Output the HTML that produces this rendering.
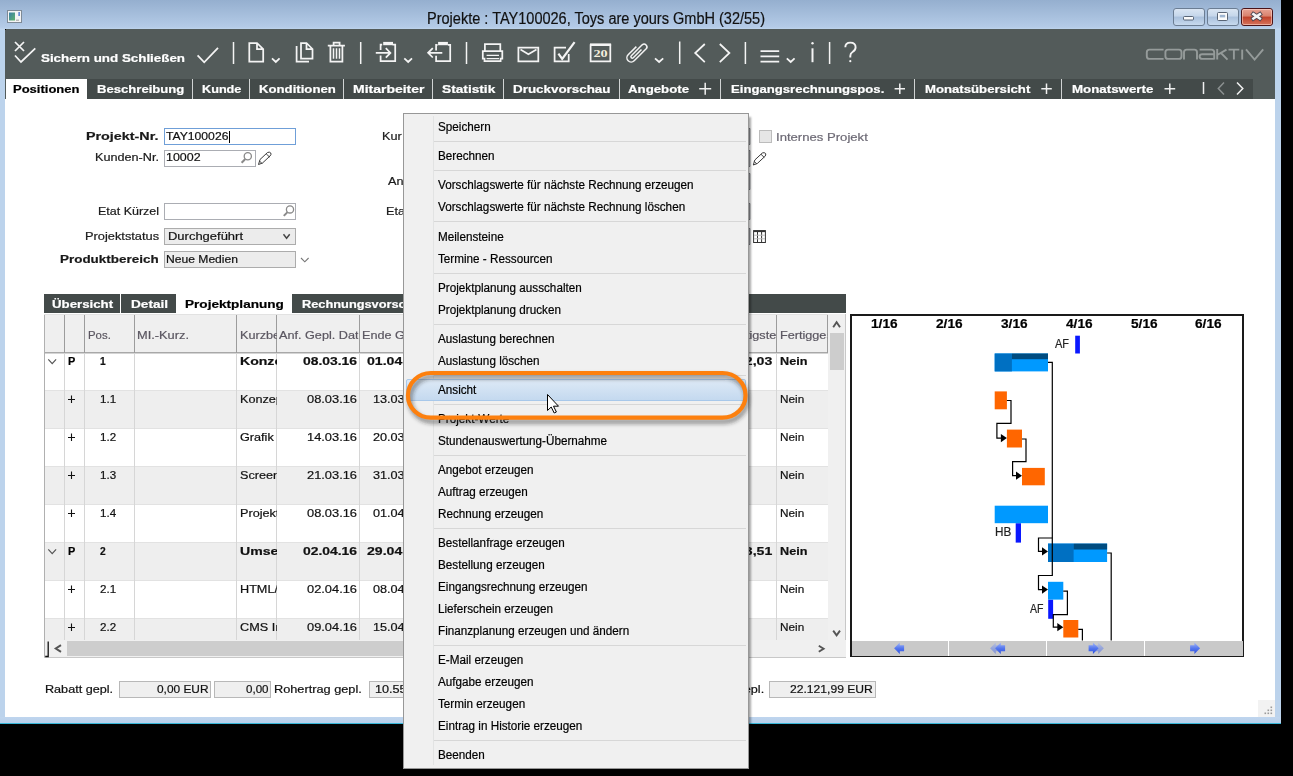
<!DOCTYPE html>
<html><head><meta charset="utf-8"><style>
html,body{margin:0;padding:0;}
body{width:1293px;height:776px;position:relative;overflow:hidden;background:#000;font-family:"Liberation Sans", sans-serif;}
.a{position:absolute;box-sizing:border-box;}
.t{position:absolute;white-space:pre;line-height:1;transform-origin:0 0;font-family:"Liberation Sans", sans-serif;-webkit-text-stroke:0.2px currentColor;}
svg{position:absolute;overflow:visible;}
</style></head><body>
<div class='a' style='left:0px;top:0px;width:1281px;height:724px;background:#bcd3ec;'></div>
<div class='a' style='left:0px;top:0px;width:1281px;height:30px;background:linear-gradient(#95afcf,#b4cbe7 90%,#c2d8ef);'></div>
<div class='a' style='left:0px;top:717px;width:1281px;height:7px;background:linear-gradient(#bfd5ee,#b7cfea);'></div>
<div class='a' style='left:0px;top:723px;width:1281px;height:1px;background:#38b7d8;'></div>
<div class='a' style='left:5px;top:30px;width:1270px;height:687px;background:#fff;'></div>
<div class='a' style='left:5px;top:29px;width:1270px;height:70px;background:#535b5a;'></div>
<div class='a' style='left:5px;top:29px;width:1px;height:1px;background:#000;'></div>
<div class='a' style='left:6px;top:79px;width:1247px;height:20px;background:#434a49;'></div>
<div class='a' style='left:6px;top:79px;width:81px;height:20px;background:#fff;'></div>
<span class='t' style='left:427.40px;top:11.00px;font-size:16px;font-weight:400;color:#111;transform:scaleX(0.9078);'>Projekte : TAY100026, Toys are yours GmbH (32/55)</span>
<span class='t' style='left:41.00px;top:53.00px;font-size:11px;font-weight:700;color:#fff;transform:scaleX(1.2144);'>Sichern und Schließen</span>
<span class='t' style='left:12.70px;top:84.00px;font-size:11px;font-weight:700;color:#000;transform:scaleX(1.1826);'>Positionen</span>
<span class='t' style='left:97.10px;top:84.00px;font-size:11px;font-weight:700;color:#fff;transform:scaleX(1.1900);'>Beschreibung</span>
<span class='t' style='left:202.40px;top:84.00px;font-size:11px;font-weight:700;color:#fff;transform:scaleX(1.1509);'>Kunde</span>
<span class='t' style='left:258.90px;top:84.00px;font-size:11px;font-weight:700;color:#fff;transform:scaleX(1.1971);'>Konditionen</span>
<span class='t' style='left:353.00px;top:84.00px;font-size:11px;font-weight:700;color:#fff;transform:scaleX(1.2711);'>Mitarbeiter</span>
<span class='t' style='left:442.20px;top:84.00px;font-size:11px;font-weight:700;color:#fff;transform:scaleX(1.2454);'>Statistik</span>
<span class='t' style='left:513.40px;top:84.00px;font-size:11px;font-weight:700;color:#fff;transform:scaleX(1.2173);'>Druckvorschau</span>
<span class='t' style='left:628.30px;top:84.00px;font-size:11px;font-weight:700;color:#fff;transform:scaleX(1.2043);'>Angebote</span>
<span class='t' style='left:730.70px;top:84.00px;font-size:11px;font-weight:700;color:#fff;transform:scaleX(1.1943);'>Eingangsrechnungspos.</span>
<span class='t' style='left:924.70px;top:84.00px;font-size:11px;font-weight:700;color:#fff;transform:scaleX(1.1964);'>Monatsübersicht</span>
<span class='t' style='left:1071.60px;top:84.00px;font-size:11px;font-weight:700;color:#fff;transform:scaleX(1.2104);'>Monatswerte</span>
<div class='a' style='left:192px;top:79px;width:1px;height:20px;background:#d0d3d3;'></div>
<div class='a' style='left:249px;top:79px;width:1px;height:20px;background:#d0d3d3;'></div>
<div class='a' style='left:343px;top:79px;width:1px;height:20px;background:#d0d3d3;'></div>
<div class='a' style='left:432px;top:79px;width:1px;height:20px;background:#d0d3d3;'></div>
<div class='a' style='left:503px;top:79px;width:1px;height:20px;background:#d0d3d3;'></div>
<div class='a' style='left:619px;top:79px;width:1px;height:20px;background:#d0d3d3;'></div>
<div class='a' style='left:720px;top:79px;width:1px;height:20px;background:#d0d3d3;'></div>
<div class='a' style='left:914px;top:79px;width:1px;height:20px;background:#d0d3d3;'></div>
<div class='a' style='left:1061px;top:79px;width:1px;height:20px;background:#d0d3d3;'></div>
<svg style='left:0;top:0' width='1293' height='100' viewBox='0 0 1293 100'>
<g fill='none' stroke='#f4f4f4' stroke-width='1.75' stroke-linecap='butt' stroke-linejoin='miter'>
<path d='M15 42 L24 51 M24 42 L15 51'/>
<path d='M15 55.5 L21 62 L35.3 48.3'/>
<path d='M197.6 55.4 L204.2 62.3 L218 47.8'/>
<path d='M233.5 42 V64 M360.7 42 V64 M466.5 42 V64 M679.7 41.6 V64.1 M745.4 42 V64 M829.6 42 V64' stroke-width='1.5'/>
<path d='M249.3 43 H257 L263.2 49.2 V61.5 H249.3 Z M257 43 V49.2 H263.2'/>
<path d='M272 58.3 L275.8 62 L279.6 58.3 M404.3 58.3 L408.2 62 L412 58.3 M655 58.3 L659.1 62 L663.2 58.3 M786.8 58.3 L790.7 62 L794.6 58.3'/>
<path d='M301 43 H306.5 L312.5 49 V58.5 H301 Z M306.5 43 V49 H312.5'/>
<path d='M296.6 46 V61.5 H309'/>
<path d='M327.8 45.6 H344.9 M333.6 45.6 V42.6 H339.6 V45.6 M330.4 45.6 V61.5 H342.4 V45.6'/><path d='M333.5 48.3 V58.8 M336.5 48.3 V58.8 M339.5 48.3 V58.8' stroke-width='1.5'/>
<path d='M380.6 50 V44.6 H382.2 M392.6 44.6 H395.2 V61.2 H380.6 V55.6 M375.8 52.9 H390.2 M385.8 48.2 L390.4 52.9 L385.8 57.6'/>
<path d='M436.1 50.5 V44.8 H437.6 M447.9 44.8 H450.2 V61.2 H436.1 V55.7 M428 52.8 H442.3 M432.8 48.1 L428.1 52.8 L432.8 57.5'/>
<path d='M484.9 51 V44 H500.3 V51 M482.8 51 H502.3 V58.6 H500.6 V61.2 H484.5 V58.6 H482.8 Z'/><path d='M486.6 55.4 H499 M486.6 58.6 H499' stroke-width='1.3'/>
<path d='M518.4 47.6 H538.3 V61.4 H518.4 Z M520.5 49.6 L528.4 54.2 L536.5 49.6'/>
<path d='M566 47.6 H554.6 V61.4 H568.7 V54'/><path d='M558.4 53.6 L562.2 58.8 L574.6 42.2' stroke-width='2.2'/>
<path d='M590.6 45 H610.3 V61.4 H590.6 Z'/>
<path d='M657 60 Z'/>
<path d='M704.8 44 L695.2 53 L704.8 62.2'/>
<path d='M719.8 44 L729.4 53 L719.8 62.2'/>
<path d='M760.5 51.2 H779.2 M760.5 56.4 H779.2 M760.5 61.6 H779.2' stroke-width='1.8'/>
<path d='M812.5 48.3 V62.2' stroke-width='2'/>
<path d='M845.3 47.3 Q845.3 42.6 850.3 42.6 Q855.6 42.6 855.6 47.3 Q855.6 50.3 852.5 52 Q850.3 53.2 850.3 56 V57.5' stroke-width='1.9'/>
</g>
<rect x='590' y='43.4' width='21.1' height='2.4' fill='#f4f4f4'/>
<rect x='383.2' y='41.9' width='9.8' height='3.3' fill='#f4f4f4'/>
<rect x='438.1' y='41.9' width='9.8' height='3.3' fill='#f4f4f4'/>
<circle cx='812.5' cy='43.3' r='1.2' fill='#f4f4f4'/>
<circle cx='850.3' cy='61.2' r='1.1' fill='#f4f4f4'/>
<text x='600.5' y='57' font-family='Liberation Serif' font-weight='700' font-size='10.8' fill='#f2eedd' text-anchor='middle' transform='translate(600.5 0) scale(1.32 1) translate(-600.5 0)'>20</text>
<g transform='translate(636.4 52.6) rotate(-45)' fill='none' stroke='#f4f4f4' stroke-width='1.5'>
<path d='M4.2 -4.25 H-7.4 A4.25 4.25 0 0 0 -7.4 4.25 H9.6 A2.83 2.83 0 0 0 9.6 -1.4 H-5.8 A1.4 1.4 0 0 0 -5.8 1.4 H5.8'/>
</g>
</svg>
<svg style='left:0;top:0' width='1293' height='30' viewBox='0 0 1293 30'>
<defs>
<linearGradient id='gb' x1='0' y1='0' x2='0' y2='1'><stop offset='0' stop-color='#dbe6f3'/><stop offset='0.45' stop-color='#c5d6ea'/><stop offset='0.5' stop-color='#a9c0dc'/><stop offset='1' stop-color='#c9dbef'/></linearGradient>
<linearGradient id='gr' x1='0' y1='0' x2='0' y2='1'><stop offset='0' stop-color='#e8a597'/><stop offset='0.45' stop-color='#d9816c'/><stop offset='0.5' stop-color='#c0412a'/><stop offset='1' stop-color='#d7775f'/></linearGradient>
<linearGradient id='gi' x1='0' y1='0' x2='1' y2='1'><stop offset='0' stop-color='#3b7fa8'/><stop offset='1' stop-color='#5fb36a'/></linearGradient>
</defs>
<rect x='7.5' y='10.5' width='14' height='12' fill='#f4f4f4' stroke='#7e8a96' stroke-width='1'/>
<rect x='9' y='12.5' width='6' height='8' fill='url(#gi)'/>
<rect x='18.5' y='12' width='1.2' height='4' fill='#2e62c8'/>
<rect x='16' y='19.5' width='3' height='1.5' fill='#bbb'/>
<rect x='1173.5' y='8.5' width='31' height='17' rx='2.5' fill='url(#gb)' stroke='#6b7d93'/>
<rect x='1207.5' y='8.5' width='31' height='17' rx='2.5' fill='url(#gb)' stroke='#6b7d93'/>
<rect x='1241.5' y='8.5' width='31' height='17' rx='2.5' fill='url(#gr)' stroke='#4a1418'/><rect x='1242.5' y='9.5' width='29' height='15' rx='1.5' fill='none' stroke='rgba(255,220,210,0.55)'/>
<rect x='1183.5' y='16.5' width='10' height='3.5' rx='1' fill='#fbfbfb' stroke='#4a5668' stroke-width='0.9'/>
<rect x='1217.5' y='12.5' width='10' height='8' rx='1' fill='#fbfbfb' stroke='#4a5668' stroke-width='0.9'/>
<rect x='1219.8' y='14.8' width='5.4' height='2.6' fill='#9fb6d2'/>
<path d='M1253.4 14.2 L1259.8 18.5 M1259.8 14.2 L1253.4 18.5' stroke='#4e4650' stroke-width='4.4' stroke-linecap='square'/>
<path d='M1253.4 14.2 L1259.8 18.5 M1259.8 14.2 L1253.4 18.5' stroke='#f4f4f4' stroke-width='2.6' stroke-linecap='square'/>
</svg>
<svg style='left:0;top:0' width='1293' height='80' viewBox='0 0 1293 80'>
<g fill='none' stroke='#959b9a' stroke-width='1.9'>
<path d='M1163.6 49.6 H1149.5 Q1146.8 49.6 1146.8 52.3 V56.2 Q1146.8 58.9 1149.5 58.9 H1163.6'/>
<path d='M1168 49.6 H1179 Q1181.5 49.6 1181.5 52.3 V56.2 Q1181.5 58.9 1179 58.9 H1168 Q1165.4 58.9 1165.4 56.2 V52.3 Q1165.4 49.6 1168 49.6 Z'/>
<path d='M1184 59.6 V52.3 Q1184 49.6 1186.7 49.6 H1194.4 Q1197 49.6 1197 52.3 V59.6'/>
<path d='M1199.6 49.6 H1211.5 Q1214.2 49.6 1214.2 52.3 V59.6 M1214.2 54.2 H1202.3 Q1199.6 54.2 1199.6 56.5 Q1199.6 58.9 1202.3 58.9 H1214.2'/>
<path d='M1217.2 49 V59.6 M1217.2 55 L1226.5 49.6 M1221 53 L1227.5 59.6'/>
<path d='M1228.5 49.6 H1239.3 M1233.9 49.6 V59.6'/>
<path d='M1242.2 49.6 V59.6'/>
<path d='M1246 49.3 L1254.6 59.6 L1263.2 49.3'/>
</g></svg>
<svg style='left:0;top:0' width='1293' height='100' viewBox='0 0 1293 100'>
<g fill='none' stroke='#f0f0f0' stroke-width='1.5'>
<path d='M699.2 88.8 H711.2 M705.2 82.8 V94.8'/>
<path d='M894.6 88.8 H905 M899.8 83.6 V94'/>
<path d='M1041.3 88.8 H1051.8 M1046.5 83.6 V94'/>
<path d='M1164.5 88.8 H1175.2 M1169.8 83.6 V94'/>
<path d='M1203.5 82 V94'/>
<path d='M1224 82.5 L1218.3 88.5 L1224 94.5' stroke='#8b9090'/>
<path d='M1237 82.5 L1242.8 88.5 L1237 94.5'/>
</g></svg>
<span class='t' style='left:86.20px;top:131.00px;font-size:11px;font-weight:700;color:#1a1a1a;transform:scaleX(1.3012);'>Projekt-Nr.</span>
<span class='t' style='left:94.60px;top:152.20px;font-size:11px;font-weight:400;color:#1a1a1a;transform:scaleX(1.1499);'>Kunden-Nr.</span>
<span class='t' style='left:97.60px;top:206.10px;font-size:11px;font-weight:400;color:#1a1a1a;transform:scaleX(1.1336);'>Etat Kürzel</span>
<span class='t' style='left:84.50px;top:231.20px;font-size:11px;font-weight:400;color:#1a1a1a;transform:scaleX(1.1652);'>Projektstatus</span>
<span class='t' style='left:60.00px;top:254.10px;font-size:11px;font-weight:700;color:#1a1a1a;transform:scaleX(1.2220);'>Produktbereich</span>
<div class='a' style='left:164px;top:128px;width:132px;height:17px;background:#fff;border:1px solid #6f9fd8;'></div>
<span class='t' style='left:165.80px;top:131.20px;font-size:11px;font-weight:400;color:#111;transform:scaleX(1.1050);'>TAY100026</span>
<div class='a' style='left:229px;top:131px;width:1px;height:12px;background:#000;'></div>
<div class='a' style='left:164px;top:150px;width:92px;height:17px;background:#fff;border:1px solid #abadb3;'></div>
<span class='t' style='left:165.80px;top:152.40px;font-size:11px;font-weight:400;color:#111;transform:scaleX(1.1309);'>10002</span>
<div class='a' style='left:164px;top:203px;width:132px;height:17px;background:#fff;border:1px solid #abadb3;'></div>
<div class='a' style='left:164px;top:228px;width:132px;height:17px;background:#ececec;border:1px solid #acacac;'></div>
<span class='t' style='left:168.00px;top:231.20px;font-size:11px;font-weight:400;color:#111;transform:scaleX(1.1794);'>Durchgeführt</span>
<div class='a' style='left:164px;top:251px;width:132px;height:17px;background:#ececec;border:1px solid #acacac;'></div>
<span class='t' style='left:165.50px;top:254.30px;font-size:11px;font-weight:400;color:#111;transform:scaleX(1.1003);'>Neue Medien</span>
<span class='t' style='left:381.80px;top:131.20px;font-size:11px;font-weight:400;color:#1a1a1a;transform:scaleX(1.1500);'>Kur</span>
<span class='t' style='left:387.60px;top:175.70px;font-size:11px;font-weight:400;color:#1a1a1a;transform:scaleX(1.1500);'>An</span>
<span class='t' style='left:386.40px;top:205.70px;font-size:11px;font-weight:400;color:#1a1a1a;transform:scaleX(1.1500);'>Eta</span>
<div class='a' style='left:759px;top:130px;width:13px;height:13px;background:#e6e6e6;border:1px solid #bcbcbc;'></div>
<span class='t' style='left:775.70px;top:131.50px;font-size:11px;font-weight:400;color:#6d6a75;transform:scaleX(1.1915);'>Internes Projekt</span>
<svg style='left:0;top:0' width='1293' height='300' viewBox='0 0 1293 300'>
<g fill='none' stroke='#8a8a8a' stroke-width='1.3'>
<circle cx='247.8' cy='156.3' r='3.6'/>
<path d='M245.3 159 L241.6 162.8' stroke-width='2'/>
<circle cx='290' cy='209.4' r='3.6'/>
<path d='M287.5 212.1 L283.8 215.9' stroke-width='2'/>
</g>
<g fill='none' stroke='#3a3a3a' stroke-width='1'>
<path d='M258.5 164.5 L260 159.5 L267.5 152.5 Q269.5 151.5 270.8 153 Q271.5 154.5 270 156 L262.5 163 Z M259.5 161 L262 163.5 M266.2 153.8 L269.5 157'/>
<path d='M753.3 165 L754.8 160 L762.3 153 Q764.3 152 765.6 153.5 Q766.3 155 764.8 156.5 L757.3 163.5 Z M754.3 161.5 L756.8 164 M761 154.3 L764.3 157.5'/>
</g>
<g fill='none' stroke='#444' stroke-width='1.4'>
<path d='M283.5 234.3 L286.6 238.3 L289.7 234.3'/>
</g>
<g fill='none' stroke='#777' stroke-width='1.1'>
<path d='M301 258 L304.8 261.8 L308.6 258'/>
</g>
<g fill='none' stroke='#333' stroke-width='1'>
<rect x='753.6' y='230.6' width='11.8' height='11.9'/>
<path d='M753.6 231.3 H765.4' stroke-width='1.6'/>
<path d='M757.5 231 V242.5 M761.6 231 V242.5'/>
<path d='M754 235.2 H765 M754 238.8 H765' stroke='#bbb'/>
</g>
<g fill='none' stroke='#6b6e75' stroke-width='1'>
<path d='M748 128.5 H749.8 V144.5 H748 M748 150.5 H749.8 V166.5 H748 M748 173.5 H749.8 V189.5 H748 M748 203.5 H749.8 V219.5 H748 M748 228.5 H749.8 V244.5 H748'/>
</g>
</svg>
<div class='a' style='left:44px;top:294px;width:802px;height:19px;background:#434a49;'></div>
<div class='a' style='left:120px;top:294px;width:1px;height:19px;background:#fff;'></div>
<div class='a' style='left:176px;top:294px;width:116px;height:19px;background:#fff;'></div>
<span class='t' style='left:51.60px;top:299.00px;font-size:11px;font-weight:700;color:#fff;transform:scaleX(1.2039);'>Übersicht</span>
<span class='t' style='left:130.50px;top:299.00px;font-size:11px;font-weight:700;color:#fff;transform:scaleX(1.2380);'>Detail</span>
<span class='t' style='left:185.40px;top:299.00px;font-size:11px;font-weight:700;color:#000;transform:scaleX(1.2353);'>Projektplanung</span>
<span class='t' style='left:302.40px;top:299.00px;font-size:11px;font-weight:700;color:#fff;transform:scaleX(1.1622);'>Rechnungsvorschlag</span>
<div class='a' style='left:44px;top:315px;width:784px;height:38px;background:#efefef;'></div>
<div class='a' style='left:44px;top:352px;width:784px;height:1px;background:#a6a6a6;'></div>
<div class='a' style='left:44px;top:353px;width:784px;height:38px;background:#fff;'></div>
<div class='a' style='left:44px;top:391px;width:784px;height:38px;background:#eeeeee;'></div>
<div class='a' style='left:44px;top:390px;width:784px;height:1px;background:#e2e2e2;'></div>
<div class='a' style='left:44px;top:429px;width:784px;height:38px;background:#fff;'></div>
<div class='a' style='left:44px;top:428px;width:784px;height:1px;background:#e2e2e2;'></div>
<div class='a' style='left:44px;top:467px;width:784px;height:38px;background:#eeeeee;'></div>
<div class='a' style='left:44px;top:466px;width:784px;height:1px;background:#e2e2e2;'></div>
<div class='a' style='left:44px;top:505px;width:784px;height:38px;background:#fff;'></div>
<div class='a' style='left:44px;top:504px;width:784px;height:1px;background:#e2e2e2;'></div>
<div class='a' style='left:44px;top:543px;width:784px;height:38px;background:#eeeeee;'></div>
<div class='a' style='left:44px;top:542px;width:784px;height:1px;background:#e2e2e2;'></div>
<div class='a' style='left:44px;top:581px;width:784px;height:38px;background:#fff;'></div>
<div class='a' style='left:44px;top:580px;width:784px;height:1px;background:#e2e2e2;'></div>
<div class='a' style='left:44px;top:619px;width:784px;height:21px;background:#eeeeee;'></div>
<div class='a' style='left:44px;top:618px;width:784px;height:1px;background:#e2e2e2;'></div>
<div class='a' style='left:44px;top:314px;width:784px;height:1px;background:#e2e2e2;'></div>
<div class='a' style='left:44px;top:352px;width:784px;height:1px;background:#a8a8a8;'></div>
<div class='a' style='left:44px;top:353px;width:784px;height:1px;background:#d4d4d4;'></div>
<div class='a' style='left:44px;top:315px;width:1px;height:342px;background:#b0b0b0;'></div>
<div class='a' style='left:64px;top:315px;width:1px;height:38px;background:#9c9c9c;'></div>
<div class='a' style='left:64px;top:353px;width:1px;height:287px;background:#d6d6d6;'></div>
<div class='a' style='left:84px;top:315px;width:1px;height:38px;background:#9c9c9c;'></div>
<div class='a' style='left:84px;top:353px;width:1px;height:287px;background:#d6d6d6;'></div>
<div class='a' style='left:134px;top:315px;width:1px;height:38px;background:#9c9c9c;'></div>
<div class='a' style='left:134px;top:353px;width:1px;height:287px;background:#d6d6d6;'></div>
<div class='a' style='left:236px;top:315px;width:1px;height:38px;background:#9c9c9c;'></div>
<div class='a' style='left:236px;top:353px;width:1px;height:287px;background:#d6d6d6;'></div>
<div class='a' style='left:276px;top:315px;width:1px;height:38px;background:#9c9c9c;'></div>
<div class='a' style='left:276px;top:353px;width:1px;height:287px;background:#d6d6d6;'></div>
<div class='a' style='left:359px;top:315px;width:1px;height:38px;background:#9c9c9c;'></div>
<div class='a' style='left:359px;top:353px;width:1px;height:287px;background:#d6d6d6;'></div>
<div class='a' style='left:776px;top:315px;width:1px;height:38px;background:#9c9c9c;'></div>
<div class='a' style='left:776px;top:353px;width:1px;height:287px;background:#d6d6d6;'></div>
<div class='a' style='left:827px;top:315px;width:1px;height:38px;background:#9c9c9c;'></div>
<span class='t' style='left:87.60px;top:329.50px;font-size:11px;font-weight:400;color:#5a5660;transform:scaleX(1.0356);'>Pos.</span>
<span class='t' style='left:137.40px;top:329.50px;font-size:11px;font-weight:400;color:#5a5660;transform:scaleX(1.1653);'>MI.-Kurz.</span>
<span class='t' style='left:239.50px;top:329.50px;font-size:11px;font-weight:400;color:#5a5660;transform:scaleX(1.1500);width:31.74px;overflow:hidden;'>Kurzbeschreibung</span>
<span class='t' style='left:279.40px;top:329.50px;font-size:11px;font-weight:400;color:#5a5660;transform:scaleX(1.1500);width:69.13px;overflow:hidden;'>Anf. Gepl. Datum</span>
<span class='t' style='left:362.30px;top:329.50px;font-size:11px;font-weight:400;color:#5a5660;transform:scaleX(1.1500);width:52.17px;overflow:hidden;'>Ende Gepl. Datum</span>
<span class='t' style='left:779.50px;top:329.50px;font-size:11px;font-weight:400;color:#5a5660;transform:scaleX(1.1500);width:41.30px;overflow:hidden;'>Fertiggestellt</span>
<span class='t' style='left:726.78px;top:329.50px;font-size:11px;font-weight:400;color:#5a5660;transform:scaleX(1.1500);'>Fertigste</span>
<svg style='left:0;top:0' width='100' height='700' viewBox='0 0 100 700'><path d='M48.3 359.4 L52.2 363.6 L56.1 359.4' stroke='#555' stroke-width='1.2' fill='none'/></svg>
<span class='t' style='left:67.70px;top:356.00px;font-size:11px;font-weight:700;color:#000;transform:scaleX(0.9940);'>P</span>
<span class='t' style='left:100.30px;top:356.00px;font-size:11px;font-weight:700;color:#111;transform:scaleX(0.9306);'>1</span>
<span class='t' style='left:239.50px;top:356.00px;font-size:11px;font-weight:700;color:#111;transform:scaleX(1.2800);width:28.52px;overflow:hidden;'>Konzeption</span>
<span class='t' style='left:302.70px;top:356.00px;font-size:11px;font-weight:700;color:#111;transform:scaleX(1.2609);'>08.03.16</span>
<span class='t' style='left:366.70px;top:356.00px;font-size:11px;font-weight:700;color:#111;transform:scaleX(1.2800);'>01.04.16</span>
<span class='t' style='left:779.60px;top:356.00px;font-size:11px;font-weight:700;color:#111;transform:scaleX(1.1491);'>Nein</span>
<span class='t' style='left:737.46px;top:356.00px;font-size:11px;font-weight:700;color:#111;transform:scaleX(1.2800);'>12,03</span>
<svg style='left:0;top:0' width='100' height='700' viewBox='0 0 100 700'><path d='M68 399.5 H75 M71.5 395.6 V403' stroke='#111' stroke-width='1.1' fill='none'/></svg>
<span class='t' style='left:99.90px;top:394.00px;font-size:11px;font-weight:400;color:#111;transform:scaleX(1.0525);'>1.1</span>
<span class='t' style='left:239.50px;top:394.00px;font-size:11px;font-weight:400;color:#111;transform:scaleX(1.1500);width:31.74px;overflow:hidden;'>Konzept</span>
<span class='t' style='left:306.70px;top:394.00px;font-size:11px;font-weight:400;color:#111;transform:scaleX(1.1675);'>08.03.16</span>
<span class='t' style='left:372.50px;top:394.00px;font-size:11px;font-weight:400;color:#111;transform:scaleX(1.1500);'>13.03.16</span>
<span class='t' style='left:779.60px;top:394.00px;font-size:11px;font-weight:400;color:#111;transform:scaleX(1.0696);'>Nein</span>
<svg style='left:0;top:0' width='100' height='700' viewBox='0 0 100 700'><path d='M68 437.5 H75 M71.5 433.6 V441' stroke='#111' stroke-width='1.1' fill='none'/></svg>
<span class='t' style='left:99.90px;top:432.00px;font-size:11px;font-weight:400;color:#111;transform:scaleX(1.0525);'>1.2</span>
<span class='t' style='left:239.50px;top:432.00px;font-size:11px;font-weight:400;color:#111;transform:scaleX(1.1500);width:31.74px;overflow:hidden;'>Grafik</span>
<span class='t' style='left:306.70px;top:432.00px;font-size:11px;font-weight:400;color:#111;transform:scaleX(1.1675);'>14.03.16</span>
<span class='t' style='left:372.50px;top:432.00px;font-size:11px;font-weight:400;color:#111;transform:scaleX(1.1500);'>20.03.16</span>
<span class='t' style='left:779.60px;top:432.00px;font-size:11px;font-weight:400;color:#111;transform:scaleX(1.0696);'>Nein</span>
<svg style='left:0;top:0' width='100' height='700' viewBox='0 0 100 700'><path d='M68 475.5 H75 M71.5 471.6 V479' stroke='#111' stroke-width='1.1' fill='none'/></svg>
<span class='t' style='left:99.90px;top:470.00px;font-size:11px;font-weight:400;color:#111;transform:scaleX(1.0525);'>1.3</span>
<span class='t' style='left:239.50px;top:470.00px;font-size:11px;font-weight:400;color:#111;transform:scaleX(1.1500);width:31.74px;overflow:hidden;'>Screendesign</span>
<span class='t' style='left:306.70px;top:470.00px;font-size:11px;font-weight:400;color:#111;transform:scaleX(1.1675);'>21.03.16</span>
<span class='t' style='left:372.50px;top:470.00px;font-size:11px;font-weight:400;color:#111;transform:scaleX(1.1500);'>31.03.16</span>
<span class='t' style='left:779.60px;top:470.00px;font-size:11px;font-weight:400;color:#111;transform:scaleX(1.0696);'>Nein</span>
<svg style='left:0;top:0' width='100' height='700' viewBox='0 0 100 700'><path d='M68 513.5 H75 M71.5 509.6 V517' stroke='#111' stroke-width='1.1' fill='none'/></svg>
<span class='t' style='left:99.90px;top:508.00px;font-size:11px;font-weight:400;color:#111;transform:scaleX(1.0525);'>1.4</span>
<span class='t' style='left:239.50px;top:508.00px;font-size:11px;font-weight:400;color:#111;transform:scaleX(1.1500);width:31.74px;overflow:hidden;'>Projekt</span>
<span class='t' style='left:306.70px;top:508.00px;font-size:11px;font-weight:400;color:#111;transform:scaleX(1.1675);'>08.03.16</span>
<span class='t' style='left:372.50px;top:508.00px;font-size:11px;font-weight:400;color:#111;transform:scaleX(1.1500);'>01.04.16</span>
<span class='t' style='left:779.60px;top:508.00px;font-size:11px;font-weight:400;color:#111;transform:scaleX(1.0696);'>Nein</span>
<svg style='left:0;top:0' width='100' height='700' viewBox='0 0 100 700'><path d='M48.3 549.4 L52.2 553.6 L56.1 549.4' stroke='#555' stroke-width='1.2' fill='none'/></svg>
<span class='t' style='left:67.70px;top:546.00px;font-size:11px;font-weight:700;color:#000;transform:scaleX(0.9940);'>P</span>
<span class='t' style='left:100.30px;top:546.00px;font-size:11px;font-weight:700;color:#111;transform:scaleX(0.9306);'>2</span>
<span class='t' style='left:239.50px;top:546.00px;font-size:11px;font-weight:700;color:#111;transform:scaleX(1.2800);width:28.52px;overflow:hidden;'>Umsetzung</span>
<span class='t' style='left:302.70px;top:546.00px;font-size:11px;font-weight:700;color:#111;transform:scaleX(1.2609);'>02.04.16</span>
<span class='t' style='left:366.70px;top:546.00px;font-size:11px;font-weight:700;color:#111;transform:scaleX(1.2800);'>29.04.16</span>
<span class='t' style='left:779.60px;top:546.00px;font-size:11px;font-weight:700;color:#111;transform:scaleX(1.1491);'>Nein</span>
<span class='t' style='left:737.46px;top:546.00px;font-size:11px;font-weight:700;color:#111;transform:scaleX(1.2800);'>13,51</span>
<svg style='left:0;top:0' width='100' height='700' viewBox='0 0 100 700'><path d='M68 589.5 H75 M71.5 585.6 V593' stroke='#111' stroke-width='1.1' fill='none'/></svg>
<span class='t' style='left:99.90px;top:584.00px;font-size:11px;font-weight:400;color:#111;transform:scaleX(1.0525);'>2.1</span>
<span class='t' style='left:239.50px;top:584.00px;font-size:11px;font-weight:400;color:#111;transform:scaleX(1.1500);width:31.74px;overflow:hidden;'>HTML/XML</span>
<span class='t' style='left:306.70px;top:584.00px;font-size:11px;font-weight:400;color:#111;transform:scaleX(1.1675);'>02.04.16</span>
<span class='t' style='left:372.50px;top:584.00px;font-size:11px;font-weight:400;color:#111;transform:scaleX(1.1500);'>08.04.16</span>
<span class='t' style='left:779.60px;top:584.00px;font-size:11px;font-weight:400;color:#111;transform:scaleX(1.0696);'>Nein</span>
<svg style='left:0;top:0' width='100' height='700' viewBox='0 0 100 700'><path d='M68 627.5 H75 M71.5 623.6 V631' stroke='#111' stroke-width='1.1' fill='none'/></svg>
<span class='t' style='left:99.90px;top:622.00px;font-size:11px;font-weight:400;color:#111;transform:scaleX(1.0525);'>2.2</span>
<span class='t' style='left:239.50px;top:622.00px;font-size:11px;font-weight:400;color:#111;transform:scaleX(1.1500);width:31.74px;overflow:hidden;'>CMS Integration</span>
<span class='t' style='left:306.70px;top:622.00px;font-size:11px;font-weight:400;color:#111;transform:scaleX(1.1675);'>09.04.16</span>
<span class='t' style='left:372.50px;top:622.00px;font-size:11px;font-weight:400;color:#111;transform:scaleX(1.1500);'>15.04.16</span>
<span class='t' style='left:779.60px;top:622.00px;font-size:11px;font-weight:400;color:#111;transform:scaleX(1.0696);'>Nein</span>
<div class='a' style='left:828px;top:314px;width:18px;height:326px;background:#f0f0f0;'></div>
<div class='a' style='left:845px;top:314px;width:1px;height:343px;background:#c8c8c8;'></div>
<div class='a' style='left:829.5px;top:332.6px;width:14.4px;height:37.4px;background:#cdcdcd;'></div>
<div class='a' style='left:45px;top:640px;width:801px;height:17px;background:#f0f0f0;'></div>
<div class='a' style='left:44px;top:657px;width:802px;height:1px;background:#c8c8c8;'></div>
<div class='a' style='left:67px;top:641px;width:680px;height:15px;background:#cdcdcd;'></div>
<svg style='left:0;top:0' width='1293' height='700' viewBox='0 0 1293 700'>
<g fill='none' stroke='#555' stroke-width='1.9'>
<path d='M833.2 327.3 L836.6 322.3 L840 327.3'/>
<path d='M833.2 630.6 L836.6 635.4 L840 630.6'/>
<path d='M818.8 645.7 L823.6 648.7 L818.8 651.7'/>
<path d='M61 645.2 L55.8 648.5 L61 651.8' stroke-width='2' stroke='#555'/>
</g>
<path d='M48.2 641.4 V656.5 H45.2' stroke='#111' stroke-width='1.3' fill='none'/>
</svg>
<div class='a' style='left:850px;top:313.5px;width:394px;height:343.5px;background:#fff;border:2px solid #1a1a1a;'></div>
<div class='a' style='left:851.5px;top:641px;width:391px;height:14.5px;background:#c9c9c9;'></div>
<div class='a' style='left:948px;top:641px;width:1px;height:14.5px;background:#fff;'></div>
<div class='a' style='left:1046px;top:641px;width:1px;height:14.5px;background:#fff;'></div>
<div class='a' style='left:1144px;top:641px;width:1px;height:14.5px;background:#fff;'></div>
<span class='t' style='left:870.70px;top:317.50px;font-size:12px;font-weight:700;color:#000;transform:scaleX(1.1387);'>1/16</span>
<span class='t' style='left:935.80px;top:317.50px;font-size:12px;font-weight:700;color:#000;transform:scaleX(1.1387);'>2/16</span>
<span class='t' style='left:1000.60px;top:317.50px;font-size:12px;font-weight:700;color:#000;transform:scaleX(1.1387);'>3/16</span>
<span class='t' style='left:1065.80px;top:317.50px;font-size:12px;font-weight:700;color:#000;transform:scaleX(1.1387);'>4/16</span>
<span class='t' style='left:1130.60px;top:317.50px;font-size:12px;font-weight:700;color:#000;transform:scaleX(1.1387);'>5/16</span>
<span class='t' style='left:1195.10px;top:317.50px;font-size:12px;font-weight:700;color:#000;transform:scaleX(1.1387);'>6/16</span>
<span class='t' style='left:1054.80px;top:336.80px;font-size:13px;font-weight:400;color:#222;transform:scaleX(0.8481);'>AF</span>
<span class='t' style='left:995.30px;top:525.00px;font-size:13px;font-weight:400;color:#222;transform:scaleX(0.9024);'>HB</span>
<span class='t' style='left:1030.40px;top:601.70px;font-size:13px;font-weight:400;color:#222;transform:scaleX(0.8120);'>AF</span>
<svg style='left:0;top:0' width='1293' height='700' viewBox='0 0 1293 700'>
<defs><linearGradient id='ga' x1='0' y1='0' x2='0' y2='1'><stop offset='0' stop-color='#a4b8f8'/><stop offset='0.5' stop-color='#5577ee'/><stop offset='1' stop-color='#2b4fe0'/></linearGradient></defs>
<g fill='#0a18ff'>
<rect x='1075.2' y='335.7' width='4.7' height='17.8'/>
<rect x='1015.7' y='523.2' width='5.3' height='19.4'/>
<rect x='1048.2' y='599.6' width='4.9' height='19.2'/>
</g>
<g>
<rect x='994.7' y='353.5' width='53.3' height='17.9' fill='#0099ff'/>
<rect x='994.7' y='353.5' width='17.2' height='17.9' fill='#0070c2'/>
<rect x='1011.9' y='353.5' width='36.1' height='5.7' fill='#004c80'/>
<rect x='1048' y='543.6' width='59.1' height='18.4' fill='#0099ff'/>
<rect x='1048' y='543.6' width='25.6' height='18.4' fill='#0070c2'/>
<rect x='1073.6' y='543.6' width='33.5' height='5.9' fill='#004c80'/>
<rect x='994.7' y='505.7' width='53.3' height='17.5' fill='#0099ff'/>
<rect x='1048' y='581.8' width='15.3' height='17.8' fill='#0099ff'/>
</g>
<g fill='#ff6600'>
<rect x='994.7' y='391.4' width='12.2' height='17.9'/>
<rect x='1006.9' y='429.6' width='15.1' height='17.9'/>
<rect x='1022' y='467.9' width='22.8' height='17.4'/>
<rect x='1063.3' y='620' width='15' height='17.5'/>
</g>
<g fill='none' stroke='#000' stroke-width='1.2'>
<path d='M1048 362.3 H1052.3 V575.5 H1038.5 V589.6 H1044'/>
<path d='M1052.3 538 H1038.5 V551.4 H1044'/>
<path d='M1006.9 400.5 H1011 V423.4 H996.9 V438.1 H1003'/>
<path d='M1022 439 H1026 V461.6 H1012.6 V475.7 H1018'/>
<path d='M1107.1 553 H1111.2 V640.5'/>
<path d='M1063.3 591.2 H1067.4 V614.7 H1053.3 V627.2 H1059.5'/>
<path d='M1078.3 629.4 H1082.4 V640.5'/>
</g>
<g fill='#000'>
<path d='M1042 585.5 L1048 589.6 L1042 593.7 Z'/>
<path d='M1042 547.3 L1048 551.4 L1042 555.5 Z'/>
<path d='M1000.9 434 L1006.9 438.1 L1000.9 442.2 Z'/>
<path d='M1016 471.6 L1022 475.7 L1016 479.8 Z'/>
<path d='M1057.3 623.1 L1063.3 627.2 L1057.3 631.3 Z'/>
</g>
<g fill='url(#ga)'><path d='M894.1 648.3 L899.8000000000001 642.5 V645.3 H904.1 V651.3 H899.8000000000001 V654.1 Z' opacity='1'/><path d='M990.1 648.3 L995.8000000000001 642.5 V645.3 H1000.1 V651.3 H995.8000000000001 V654.1 Z' opacity='0.45'/><path d='M995.1 648.3 L1000.8000000000001 642.5 V645.3 H1005.1 V651.3 H1000.8000000000001 V654.1 Z' opacity='1'/><path d='M1103.9 648.3 L1098.2 642.5 V645.3 H1093.9 V651.3 H1098.2 V654.1 Z' opacity='0.45'/><path d='M1098.6 648.3 L1092.8999999999999 642.5 V645.3 H1088.6 V651.3 H1092.8999999999999 V654.1 Z' opacity='1'/><path d='M1200.1 648.3 L1194.3999999999999 642.5 V645.3 H1190.1 V651.3 H1194.3999999999999 V654.1 Z' opacity='1'/></g>
</svg>
<span class='t' style='left:44.90px;top:683.70px;font-size:11px;font-weight:400;color:#111;transform:scaleX(1.1462);'>Rabatt gepl.</span>
<div class='a' style='left:119px;top:681px;width:92px;height:17px;background:#efefef;border:1px solid #b8b8b8;'></div>
<span class='t' style='left:156.50px;top:683.90px;font-size:11px;font-weight:400;color:#111;transform:scaleX(1.0796);'>0,00 EUR</span>
<div class='a' style='left:214px;top:681px;width:57px;height:17px;background:#efefef;border:1px solid #b8b8b8;'></div>
<span class='t' style='left:245.50px;top:683.90px;font-size:11px;font-weight:400;color:#111;transform:scaleX(1.0503);'>0,00</span>
<span class='t' style='left:274.20px;top:683.70px;font-size:11px;font-weight:400;color:#111;transform:scaleX(1.1579);'>Rohertrag gepl.</span>
<div class='a' style='left:369px;top:681px;width:80px;height:17px;background:#efefef;border:1px solid #b8b8b8;'></div>
<span class='t' style='left:374.80px;top:683.90px;font-size:11px;font-weight:400;color:#111;transform:scaleX(1.1500);'>10.551,92 EUR</span>
<span class='t' style='left:676.90px;top:683.70px;font-size:11px;font-weight:400;color:#111;transform:scaleX(1.1500);'>Rohertrag gepl.</span>
<div class='a' style='left:769px;top:681px;width:107px;height:17px;background:#efefef;border:1px solid #b8b8b8;'></div>
<span class='t' style='left:790.30px;top:683.90px;font-size:11px;font-weight:400;color:#111;transform:scaleX(1.1008);'>22.121,99 EUR</span>
<div class='a' style='left:1258px;top:700px;width:17px;height:17px;background:#f2f2f2;'></div>
<svg style='left:0;top:0' width='1293' height='776' viewBox='0 0 1293 776'>
<g fill='#9a9a9a'><rect x='1270.5' y='706.5' width='1.6' height='1.6'/><rect x='1270.5' y='709.5' width='1.6' height='1.6'/><rect x='1270.5' y='712.5' width='1.6' height='1.6'/>
<rect x='1267.5' y='709.5' width='1.6' height='1.6'/><rect x='1267.5' y='712.5' width='1.6' height='1.6'/><rect x='1264.5' y='712.5' width='1.6' height='1.6'/></g></svg>
<div class='a' style='left:403px;top:113px;width:346px;height:656px;background:#f0f0f0;border:1px solid #979797;box-shadow:2px 4px 2px rgba(0,0,0,0.35);'></div>
<div class='a' style='left:433px;top:116px;width:1px;height:649px;background:#e2e3e3;'></div>
<span class='t' style='left:438.00px;top:121.30px;font-size:12px;font-weight:400;color:#000;transform:scaleX(0.9750);'>Speichern</span>
<div class='a' style='left:434px;top:141.33px;width:312px;height:1px;background:#d7d7d7;'></div>
<span class='t' style='left:438.00px;top:150.35px;font-size:12px;font-weight:400;color:#000;transform:scaleX(0.9750);'>Berechnen</span>
<div class='a' style='left:434px;top:170.39px;width:312px;height:1px;background:#d7d7d7;'></div>
<span class='t' style='left:438.00px;top:179.40px;font-size:12px;font-weight:400;color:#000;transform:scaleX(0.9750);'>Vorschlagswerte für nächste Rechnung erzeugen</span>
<span class='t' style='left:438.00px;top:201.44px;font-size:12px;font-weight:400;color:#000;transform:scaleX(0.9750);'>Vorschlagswerte für nächste Rechnung löschen</span>
<div class='a' style='left:434px;top:221.48px;width:312px;height:1px;background:#d7d7d7;'></div>
<span class='t' style='left:438.00px;top:230.50px;font-size:12px;font-weight:400;color:#000;transform:scaleX(0.9750);'>Meilensteine</span>
<span class='t' style='left:438.00px;top:252.54px;font-size:12px;font-weight:400;color:#000;transform:scaleX(0.9750);'>Termine - Ressourcen</span>
<div class='a' style='left:434px;top:272.57px;width:312px;height:1px;background:#d7d7d7;'></div>
<span class='t' style='left:438.00px;top:281.59px;font-size:12px;font-weight:400;color:#000;transform:scaleX(0.9750);'>Projektplanung ausschalten</span>
<span class='t' style='left:438.00px;top:303.63px;font-size:12px;font-weight:400;color:#000;transform:scaleX(0.9750);'>Projektplanung drucken</span>
<div class='a' style='left:434px;top:323.66px;width:312px;height:1px;background:#d7d7d7;'></div>
<span class='t' style='left:438.00px;top:332.68px;font-size:12px;font-weight:400;color:#000;transform:scaleX(0.9750);'>Auslastung berechnen</span>
<span class='t' style='left:438.00px;top:354.72px;font-size:12px;font-weight:400;color:#000;transform:scaleX(0.9750);'>Auslastung löschen</span>
<div class='a' style='left:434px;top:374.75px;width:312px;height:1px;background:#d7d7d7;'></div>
<div class='a' style='left:406px;top:378.76px;width:340px;height:22px;background:linear-gradient(#dde9f6,#c4d9ef);border:1px solid #a8c8ea;border-radius:2px;'></div>
<span class='t' style='left:438.00px;top:383.77px;font-size:12px;font-weight:400;color:#000;transform:scaleX(0.9750);'>Ansicht</span>
<div class='a' style='left:434px;top:403.81px;width:312px;height:1px;background:#d7d7d7;'></div>
<span class='t' style='left:438.00px;top:412.82px;font-size:12px;font-weight:400;color:#000;transform:scaleX(0.9750);'>Projekt-Werte</span>
<span class='t' style='left:438.00px;top:434.86px;font-size:12px;font-weight:400;color:#000;transform:scaleX(0.9750);'>Stundenauswertung-Übernahme</span>
<div class='a' style='left:434px;top:454.9px;width:312px;height:1px;background:#d7d7d7;'></div>
<span class='t' style='left:438.00px;top:463.92px;font-size:12px;font-weight:400;color:#000;transform:scaleX(0.9750);'>Angebot erzeugen</span>
<span class='t' style='left:438.00px;top:485.95px;font-size:12px;font-weight:400;color:#000;transform:scaleX(0.9750);'>Auftrag erzeugen</span>
<span class='t' style='left:438.00px;top:507.99px;font-size:12px;font-weight:400;color:#000;transform:scaleX(0.9750);'>Rechnung erzeugen</span>
<div class='a' style='left:434px;top:528.03px;width:312px;height:1px;background:#d7d7d7;'></div>
<span class='t' style='left:438.00px;top:537.05px;font-size:12px;font-weight:400;color:#000;transform:scaleX(0.9750);'>Bestellanfrage erzeugen</span>
<span class='t' style='left:438.00px;top:559.09px;font-size:12px;font-weight:400;color:#000;transform:scaleX(0.9750);'>Bestellung erzeugen</span>
<span class='t' style='left:438.00px;top:581.13px;font-size:12px;font-weight:400;color:#000;transform:scaleX(0.9750);'>Eingangsrechnung erzeugen</span>
<span class='t' style='left:438.00px;top:603.17px;font-size:12px;font-weight:400;color:#000;transform:scaleX(0.9750);'>Lieferschein erzeugen</span>
<span class='t' style='left:438.00px;top:625.21px;font-size:12px;font-weight:400;color:#000;transform:scaleX(0.9750);'>Finanzplanung erzeugen und ändern</span>
<div class='a' style='left:434px;top:645.24px;width:312px;height:1px;background:#d7d7d7;'></div>
<span class='t' style='left:438.00px;top:654.26px;font-size:12px;font-weight:400;color:#000;transform:scaleX(0.9750);'>E-Mail erzeugen</span>
<span class='t' style='left:438.00px;top:676.30px;font-size:12px;font-weight:400;color:#000;transform:scaleX(0.9750);'>Aufgabe erzeugen</span>
<span class='t' style='left:438.00px;top:698.34px;font-size:12px;font-weight:400;color:#000;transform:scaleX(0.9750);'>Termin erzeugen</span>
<span class='t' style='left:438.00px;top:720.38px;font-size:12px;font-weight:400;color:#000;transform:scaleX(0.9750);'>Eintrag in Historie erzeugen</span>
<div class='a' style='left:434px;top:740.41px;width:312px;height:1px;background:#d7d7d7;'></div>
<span class='t' style='left:438.00px;top:749.43px;font-size:12px;font-weight:400;color:#000;transform:scaleX(0.9750);'>Beenden</span>
<svg style='left:0;top:0' width='1293' height='776' viewBox='0 0 1293 776'>
<defs><filter id='sh' x='-20%' y='-50%' width='140%' height='200%'><feGaussianBlur stdDeviation='2'/></filter></defs>
<rect x='410' y='376.5' width='337' height='45' rx='23' ry='22' fill='none' stroke='rgba(40,40,40,0.55)' stroke-width='4' filter='url(#sh)'/>
<rect x='408' y='373' width='337.5' height='44.7' rx='23' ry='22' fill='none' stroke='#fd800e' stroke-width='4.2'/>
<path d='M547.5 394.5 V410.5 L551.2 407 L554.2 413 L556.4 412 L553.5 406.2 H558.5 Z' fill='#fff' stroke='#000' stroke-width='1' stroke-linejoin='miter'/>
</svg>
</body></html>
